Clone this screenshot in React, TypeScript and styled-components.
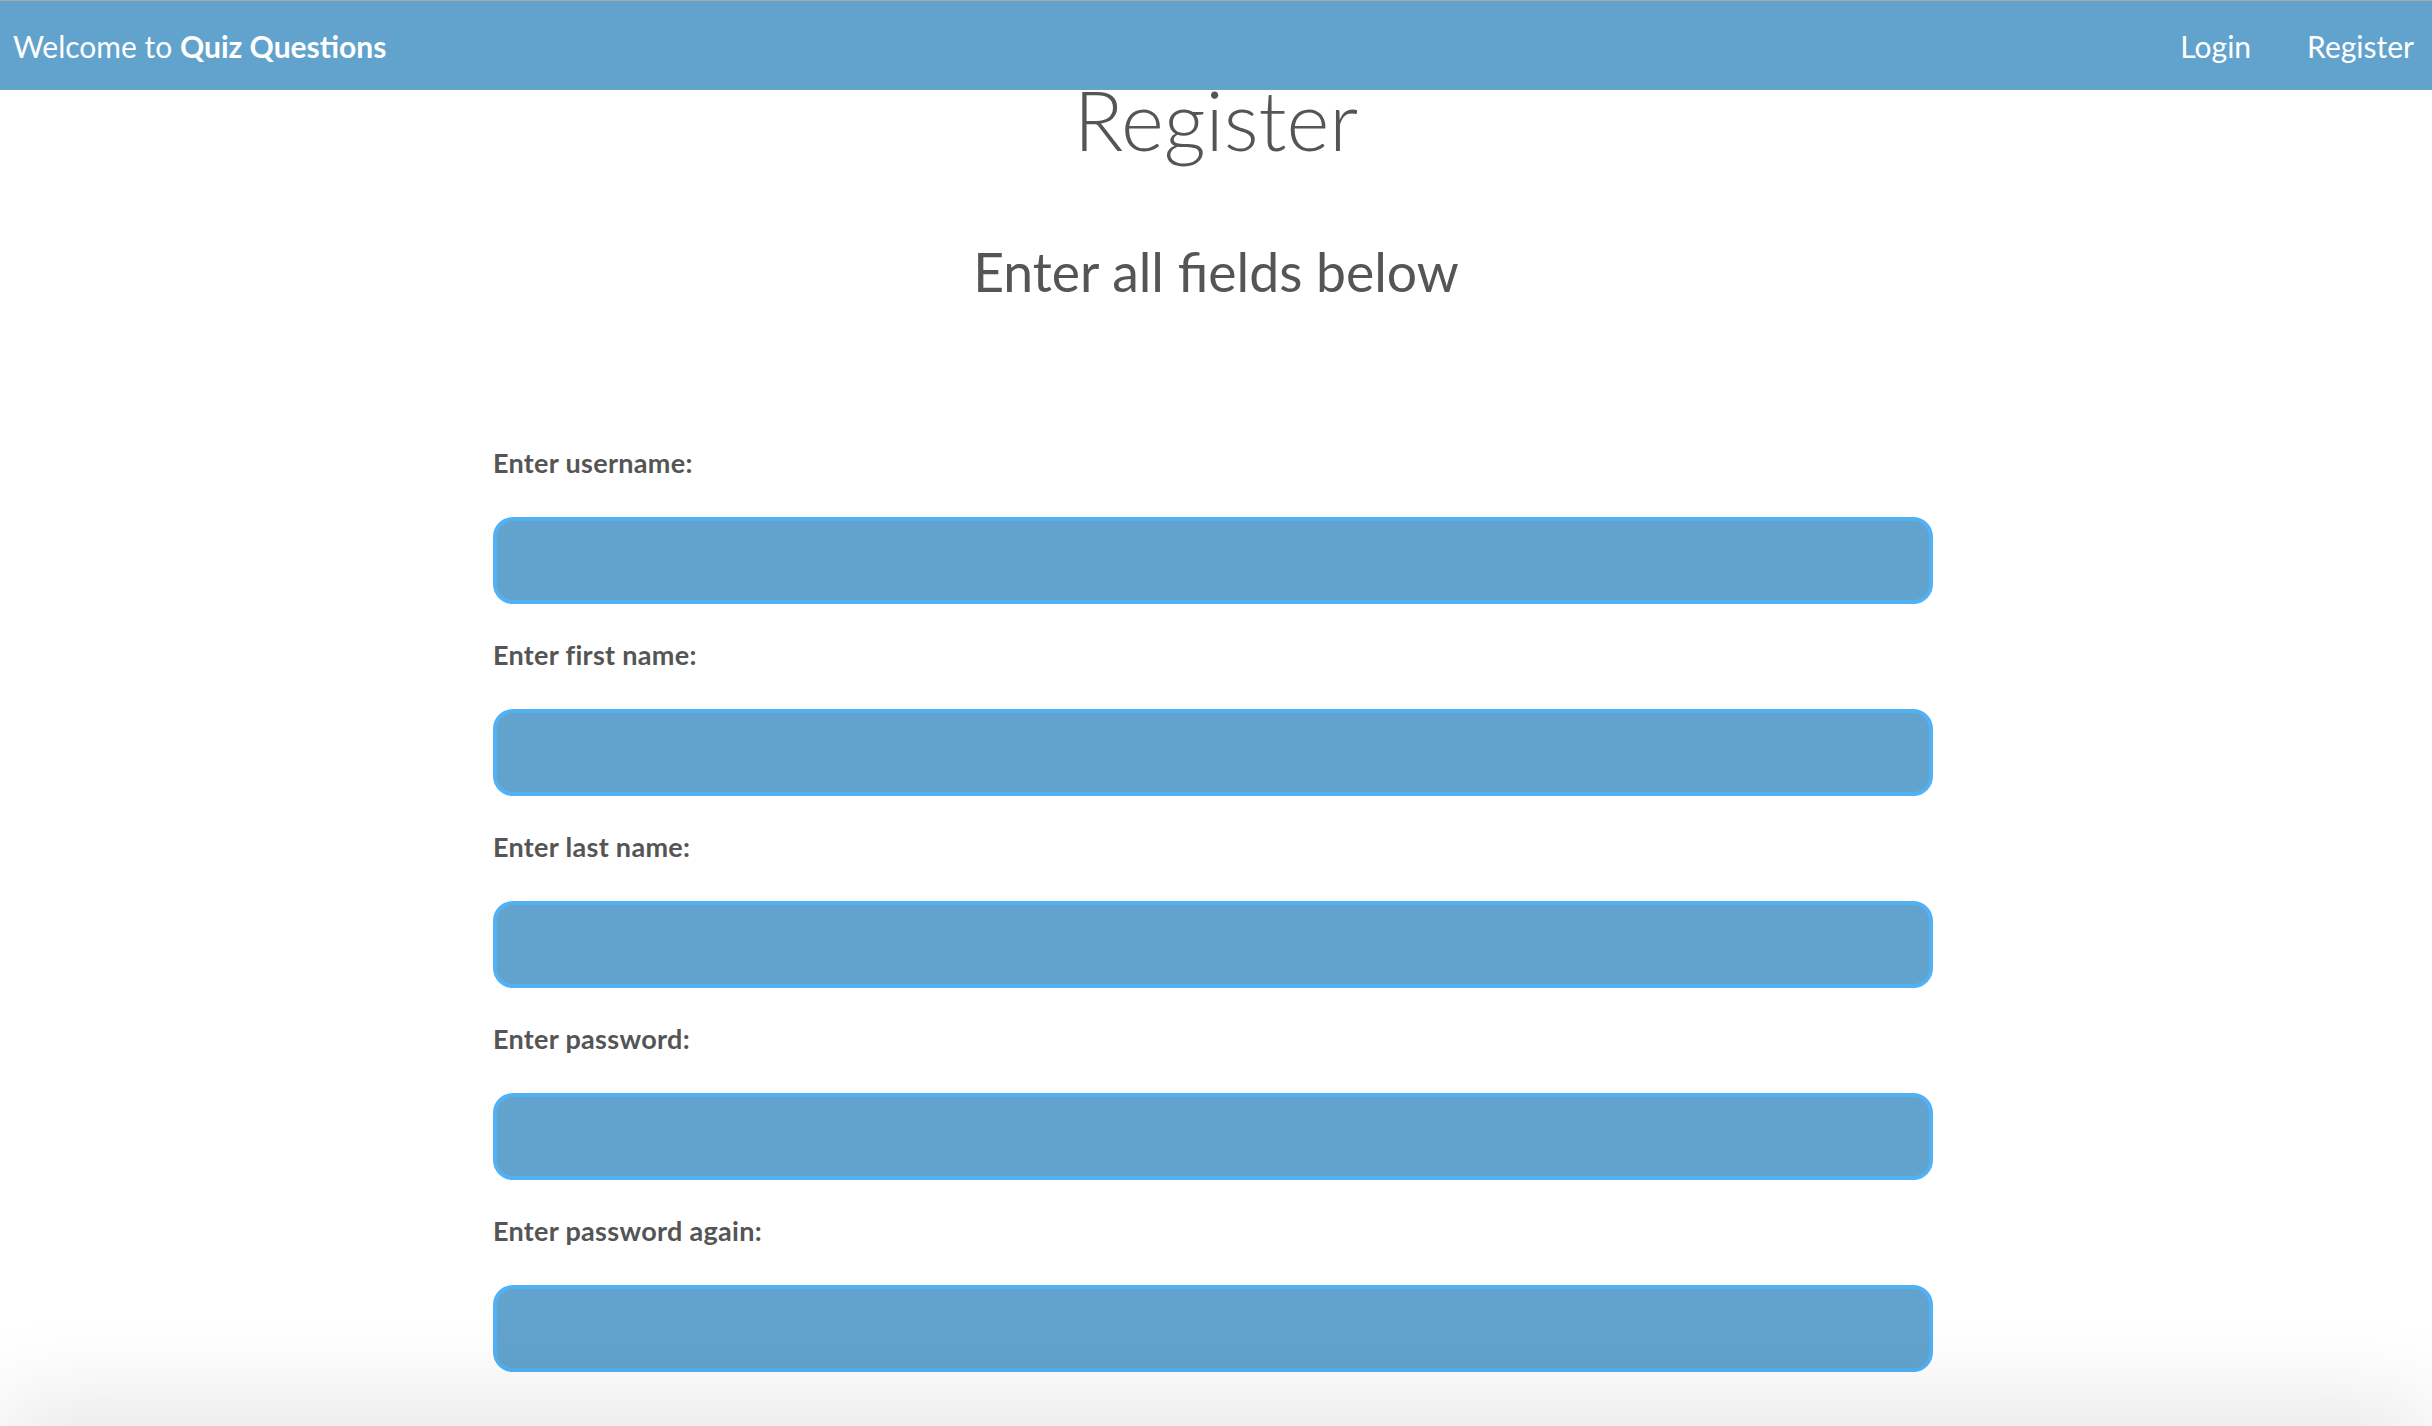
import React from "react";
import styled, { createGlobalStyle } from "styled-components";

const GlobalStyle = createGlobalStyle`
  html, body {
    margin: 0;
    padding: 0;
    background: #ffffff;
  }
  body {
    font-family: "Source Sans Pro", Lato, "Open Sans", sans-serif;
    color: #555555;
  }
  * { box-sizing: border-box; }
`;

const Header = styled.header`
  height: 90px;
  border-top: 1px solid #a8a8a8;
  background: #62a3cd;
  display: flex;
  align-items: center;
  justify-content: space-between;
  padding: 0 18px 0 13px;
  color: #ffffff;
`;

const Brand = styled.div`
  font-size: 30px;
  font-weight: 400;
  strong {
    font-weight: 700;
  }
`;

const Nav = styled.nav`
  display: flex;
  gap: 56px;
`;

const NavLink = styled.a`
  color: #ffffff;
  text-decoration: none;
  font-size: 30px;
  font-weight: 400;
`;

const Main = styled.main`
  display: flex;
  flex-direction: column;
  align-items: center;
`;

const Title = styled.h1`
  margin: 0;
  font-size: 82px;
  line-height: 56px;
  padding-top: 1px;
  font-weight: 300;
  color: #555555;
`;

const Subtitle = styled.h2`
  margin: 92px 0 0;
  font-size: 53.5px;
  line-height: 64px;
  font-weight: 400;
  color: #555555;
`;

const Form = styled.form`
  width: 1440px;
  margin: 142px 6px 0 0;
  display: flex;
  flex-direction: column;
`;

const Field = styled.div`
  display: flex;
  flex-direction: column;
  margin-bottom: 33px;
`;

const Label = styled.label`
  font-size: 27px;
  line-height: 36px;
  letter-spacing: 0.3px;
  font-weight: 700;
  color: #555555;
  margin-bottom: 36px;
`;

const Input = styled.input`
  height: 87px;
  width: 100%;
  border: 4px solid #52b0f5;
  border-radius: 20px;
  background: #62a3cd;
  outline: none;
  font-size: 28px;
  color: #ffffff;
  padding: 0 20px;
`;

const BottomShade = styled.div`
  position: fixed;
  left: 30px;
  right: 30px;
  bottom: -120px;
  height: 120px;
  box-shadow: 0 0 90px 30px rgba(0, 0, 0, 0.09);
  pointer-events: none;
`;

const fields = [
  { id: "username", label: "Enter username:", type: "text" },
  { id: "firstname", label: "Enter first name:", type: "text" },
  { id: "lastname", label: "Enter last name:", type: "text" },
  { id: "password", label: "Enter password:", type: "password" },
  { id: "password2", label: "Enter password again:", type: "password" },
];

export default function App() {
  return (
    <>
      <GlobalStyle />
      <Header>
        <Brand>
          Welcome to <strong>Quiz Questions</strong>
        </Brand>
        <Nav>
          <NavLink href="#">Login</NavLink>
          <NavLink href="#">Register</NavLink>
        </Nav>
      </Header>
      <Main>
        <Title>Register</Title>
        <Subtitle>Enter all fields below</Subtitle>
        <Form onSubmit={(e) => e.preventDefault()}>
          {fields.map((f) => (
            <Field key={f.id}>
              <Label htmlFor={f.id}>{f.label}</Label>
              <Input id={f.id} type={f.type} />
            </Field>
          ))}
        </Form>
      </Main>
      <BottomShade />
    </>
  );
}
